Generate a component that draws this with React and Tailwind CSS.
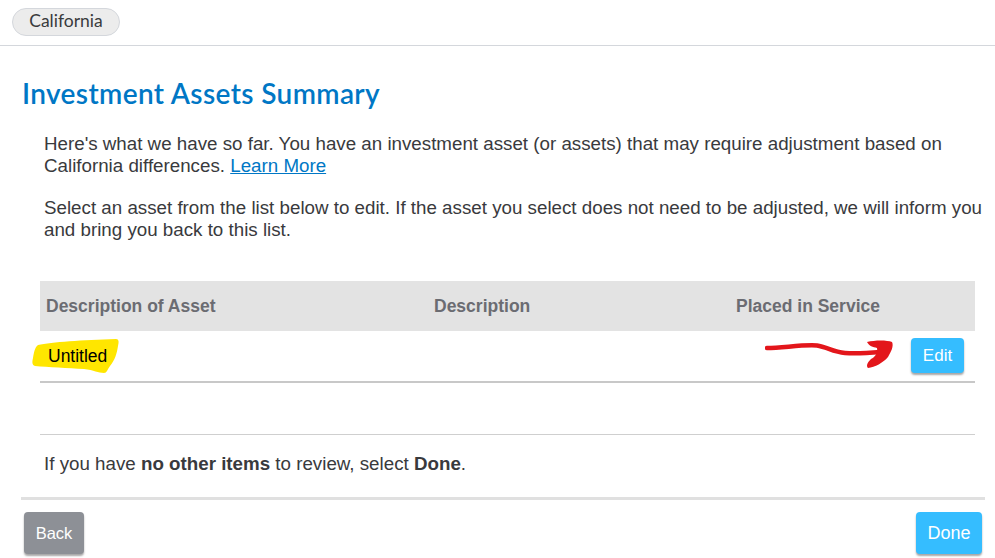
import React from "react";

function Highlight() {
  return (
    <svg className="absolute left-[-8px] top-[7px]" width="90" height="36" viewBox="0 0 90 36">
      <path
        d="M6 7 C20 4 50 2 84 1 C87 1 87 4 86 8 C85 15 83 22 78 28 C75 32 75 35 72 35 C66 35 62 32 52 31 C36 30 16 29 3 28 C0 27 0 24 1 20 C2 14 3 9 6 7 Z"
        fill="#ffe600"
      />
    </svg>
  );
}

function RedArrow() {
  return (
    <svg className="absolute left-[725px] top-[6px]" width="132" height="36" viewBox="0 0 132 36">
      <path
        d="M2 11 C18 11 36 7.5 52 8.5 C62 10 68 15 80 16 C92 17 104 16 116 15"
        fill="none"
        stroke="#e3161b"
        strokeWidth="4.5"
        strokeLinecap="round"
      />
      <path
        d="M102 5 C110 3 122 3 127 5 C129 9 126 15 123 20 C118 26 110 30 103 31 C101 29 102 26 106 22 C110 20 113 16 112 11 C108 10 104 9 102 5 Z"
        fill="#e3161b"
      />
    </svg>
  );
}

export default function App() {
  return (
    <div className="w-[995px] h-[558px] overflow-hidden bg-white font-['Liberation_Sans',Arial,sans-serif] text-[#393a3d]">
      <div className="h-[46px] border-b border-[#d4d7dc] pt-2 pl-3">
        <div className="flex h-[28px] w-[108px] items-center justify-center rounded-full border border-[#d4d7dc] bg-[#ececec] pb-[1px] font-['Lato',sans-serif] text-[17.5px]">
          California
        </div>
      </div>

      <h1 className="mt-[27px] ml-[22px] font-['Lato',sans-serif] text-[28px] leading-[40px] font-semibold tracking-[0.37px] text-[#0077c5]">
        Investment Assets Summary
      </h1>

      <div className="mt-[20px] ml-[44px] w-[945px] text-[18.75px] leading-[21.5px]">
        <p>
          Here's what we have so far. You have an investment asset (or assets) that may require adjustment based on
          California differences. <a className="text-[#0077c5] underline">Learn More</a>
        </p>
        <p className="mt-[21px]">
          Select an asset from the list below to edit. If the asset you select does not need to be adjusted, we will
          inform you and bring you back to this list.
        </p>
      </div>

      <div className="mt-[41px] ml-[40px] w-[935px]">
        <div className="grid h-[50px] grid-cols-[388px_302px_1fr] items-center bg-[#e3e3e3] pl-[6px] text-[17.5px] font-bold text-[#6b6c72]">
          <div>Description of Asset</div>
          <div>Description</div>
          <div>Placed in Service</div>
        </div>
        <div className="relative flex h-[52px] items-center justify-between border-b-2 border-[#c8c8c8] pr-[11px] pl-[8px]">
          <Highlight />
          <RedArrow />
          <span className="relative mt-[1px] text-[17.5px] text-black">Untitled</span>
          <button className="relative mb-[1px] h-[35px] w-[53px] rounded-[4px] bg-[#35bdff] text-[17px] text-white shadow-[0_2px_2px_rgba(0,0,0,0.35)]">
            Edit
          </button>
        </div>
        <div className="mt-[51px] border-t border-[#cfcfcf] pt-[18px] pl-[4px] text-[18.75px] leading-[21px]">
          If you have <b>no other items</b> to review, select <b>Done</b>.
        </div>
      </div>

      <div className="mt-[23px] ml-[21px] flex w-[964px] justify-between border-t-[3px] border-[#e0e0e0] pt-[12px] pr-[3px] pl-[3px]">
        <button className="h-[42px] w-[60px] rounded-[4px] bg-[#8d9096] text-[16.5px] text-white shadow-[0_2px_2px_rgba(0,0,0,0.35)]">
          Back
        </button>
        <button className="h-[42px] w-[66px] rounded-[4px] bg-[#35bdff] text-[18px] text-white shadow-[0_2px_2px_rgba(0,0,0,0.35)]">
          Done
        </button>
      </div>
    </div>
  );
}
